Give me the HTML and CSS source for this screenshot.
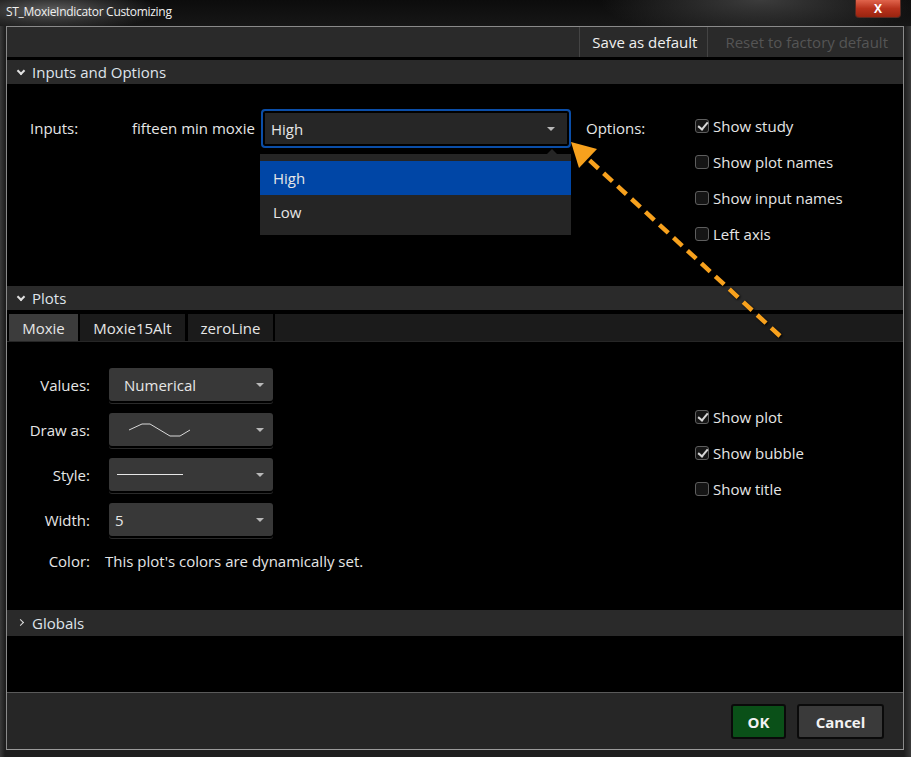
FILE: index.html
```html
<!DOCTYPE html>
<html lang="en">
<head>
    <meta charset="UTF-8">
    <title>ST_MoxieIndicator Customizing</title>
    <link rel="stylesheet" href="styles.css">
</head>
<body>
<div class="window">
    <div class="titlebar">
        <span class="title">ST_MoxieIndicator Customizing</span>
        <button class="close">X</button>
    </div>

    <div class="panel">
        <div class="toolbar">
            <span class="tool-btn">Save as default</span>
            <span class="tool-btn disabled">Reset to factory default</span>
        </div>

        <div class="section-head"><span class="chev down"></span>Inputs and Options</div>
        <div class="inputs-body">
            <span class="lbl inputs-lbl">Inputs:</span>
            <span class="lbl input-name">fifteen min moxie</span>
            <div class="select-wrap">
                <div class="select focused">
                    <span>High</span>
                    <span class="caret"></span>
                </div>
                <div class="menu">
                    <div class="menu-item active">High</div>
                    <div class="menu-item">Low</div>
                </div>
            </div>
            <span class="lbl options-lbl">Options:</span>
            <div class="checks">
                <label class="check"><span class="box on"></span>Show study</label>
                <label class="check"><span class="box"></span>Show plot names</label>
                <label class="check"><span class="box"></span>Show input names</label>
                <label class="check"><span class="box"></span>Left axis</label>
            </div>
        </div>

        <div class="section-head"><span class="chev down"></span>Plots</div>
        <div class="tabs">
            <span class="tab active">Moxie</span>
            <span class="tab">Moxie15Alt</span>
            <span class="tab">zeroLine</span>
            <span class="tab-fill"></span>
        </div>
        <div class="plot-body">
            <div class="plot-form">
                <div class="form-row">
                    <span class="form-lbl">Values:</span>
                    <div class="dd"><span class="dd-text">Numerical</span><span class="caret"></span></div>
                </div>
                <div class="form-row">
                    <span class="form-lbl">Draw as:</span>
                    <div class="dd">
                        <svg class="dd-icon" width="90" height="33" viewBox="0 0 90 33">
                            <polyline points="20,17 33,11 41,11 61,23 71,23 81,17" fill="none" stroke="#d8d8d8" stroke-width="1"/>
                        </svg>
                        <span class="caret"></span>
                    </div>
                </div>
                <div class="form-row">
                    <span class="form-lbl">Style:</span>
                    <div class="dd">
                        <svg class="dd-icon" width="90" height="33" viewBox="0 0 90 33">
                            <line x1="8" y1="16.5" x2="74" y2="16.5" stroke="#e6e6e6" stroke-width="1"/>
                        </svg>
                        <span class="caret"></span>
                    </div>
                </div>
                <div class="form-row">
                    <span class="form-lbl">Width:</span>
                    <div class="dd"><span class="dd-text short">5</span><span class="caret"></span></div>
                </div>
                <div class="form-row color-row">
                    <span class="form-lbl">Color:</span>
                    <span class="color-note">This plot's colors are dynamically set.</span>
                </div>
            </div>
            <div class="checks plot-checks">
                <label class="check"><span class="box on"></span>Show plot</label>
                <label class="check"><span class="box on"></span>Show bubble</label>
                <label class="check"><span class="box"></span>Show title</label>
            </div>
        </div>

        <div class="section-head globals"><span class="chev right"></span>Globals</div>
        <div class="globals-body"></div>

        <div class="footer">
            <button class="btn ok">OK</button>
            <button class="btn cancel">Cancel</button>
        </div>
    </div>

    <!-- annotation arrow drawn over the dialog -->
    <svg class="annot" width="911" height="757" viewBox="0 0 911 757">
        <line x1="780" y1="336" x2="586" y2="157" stroke="#f7a11d" stroke-width="4.5" stroke-dasharray="12 7"/>
        <polygon points="571,142 579,168 597,149" fill="#f7a11d"/>
    </svg>
</div>
</body>
</html>
```

FILE: styles.css
```css
* {
    box-sizing: border-box;
}
body {
    margin: 0;
    background-color: #141414;
    font-family: "Open Sans", "Liberation Sans", sans-serif;
    font-size: 15px;
    color: #e6e6e6;
}
.window {
    position: relative;
    width: 911px;
    height: 757px;
    overflow: hidden;
    background: linear-gradient(to right, #3a3a3a 0, #1e1e1e 5px, #1e1e1e 904px, #3a3a3a 911px);
}
.titlebar {
    height: 26px;
    display: flex;
    align-items: flex-start;
    justify-content: space-between;
    background:
        radial-gradient(ellipse 110px 22px at 50px 10px, #5c5c5c 0, rgba(60,60,60,0.6) 60%, rgba(0,0,0,0) 100%),
        radial-gradient(ellipse 160px 40px at 760px 0, #3c3c3c 0, rgba(0,0,0,0) 100%),
        linear-gradient(#0c0c0c, #161616);
}
.title {
    font-size: 12px;
    color: #f0f0f0;
    padding: 3px 0 0 6px;
    letter-spacing: -0.3px;
}
.close {
    margin-right: 10px;
    width: 46px;
    height: 18px;
    border: 1px solid #5a2a22;
    border-top: none;
    border-radius: 0 0 4px 4px;
    background: linear-gradient(#e0644c, #b8321c 50%, #9a2410);
    color: #fff;
    font-family: "Open Sans", sans-serif;
    font-weight: bold;
    font-size: 12px;
    line-height: 14px;
    padding: 0;
}
.panel {
    margin-left: 6px;
    width: 898px;
    height: 724px;
    border: 1px solid #8a8a8a;
    border-bottom-color: #9a9a9a;
    background-color: #000;
    display: flex;
    flex-direction: column;
}
.toolbar {
    height: 30px;
    background-color: #2a2a2a;
    display: flex;
    justify-content: flex-end;
    align-items: stretch;
    margin-bottom: 3px;
    padding-right: 15px;
}
.tool-btn {
    display: flex;
    align-items: center;
    padding: 0 10px 0 12px;
    border-left: 1px solid #444;
    color: #f0f0f0;
    font-size: 15px;
}
.tool-btn.disabled {
    color: #555;
    padding-left: 17px;
    padding-right: 0;
}
.section-head {
    height: 24px;
    background-color: #2a2a2a;
    display: flex;
    align-items: center;
    padding-left: 10px;
    color: #dfe4ea;
}
.section-head.globals {
    height: 26px;
}
.chev {
    width: 8px;
    height: 12px;
    margin-right: 7px;
    position: relative;
}
.chev::after {
    content: "";
    position: absolute;
    left: 1px;
    top: 2px;
    width: 4px;
    height: 4px;
    border-right: 2px solid #e0e0e0;
    border-bottom: 2px solid #e0e0e0;
}
.chev.down::after {
    transform: rotate(45deg);
}
.chev.right::after {
    left: 1px;
    top: 3px;
    width: 4px;
    height: 4px;
    border-width: 1.5px;
    transform: rotate(-45deg);
}
.inputs-body {
    height: 201px;
    display: flex;
    align-items: flex-start;
    padding: 24px 0 0 23px;
    margin-bottom: 1px;
}
.lbl {
    height: 39px;
    display: flex;
    align-items: center;
    white-space: nowrap;
}
.inputs-lbl {
    width: 102px;
}
.input-name {
    width: 129px;
}
.select-wrap {
    position: relative;
    margin-top: 1px;
}
.select {
    width: 310px;
    height: 39px;
    border-radius: 4px;
    background-color: #262626;
    display: flex;
    align-items: center;
    justify-content: space-between;
    padding: 0 14px 0 8px;
}
.select.focused {
    border: 2px solid #0b4ea8;
    box-shadow: inset 0 0 0 2px #000;
}
.caret {
    width: 0;
    height: 0;
    border-left: 4px solid transparent;
    border-right: 4px solid transparent;
    border-top: 4px solid #b8b8b8;
}
.menu {
    position: absolute;
    left: -1px;
    top: 45px;
    width: 311px;
    height: 81px;
    background-color: #252525;
    padding-top: 7px;
}
.menu::before {
    content: "";
    position: absolute;
    right: 14px;
    top: -5px;
    border-left: 5px solid transparent;
    border-right: 5px solid transparent;
    border-bottom: 5px solid #252525;
}
.menu-item {
    height: 34px;
    display: flex;
    align-items: center;
    padding-left: 13px;
}
.menu-item.active {
    background-color: #0046a6;
}
.options-lbl {
    margin-left: 15px;
    width: 109px;
}
.checks {
    display: flex;
    flex-direction: column;
}
.check {
    height: 36px;
    display: flex;
    align-items: center;
    color: #e6e6e6;
    white-space: nowrap;
}
.box {
    width: 14px;
    height: 14px;
    border: 1px solid #5e5e5e;
    border-radius: 3px;
    background-color: #151515;
    margin-right: 4px;
    position: relative;
}
.box.on::after {
    content: "";
    position: absolute;
    left: 4px;
    top: 0;
    width: 4px;
    height: 8px;
    border-right: 2px solid #d8d8d8;
    border-bottom: 2px solid #d8d8d8;
    transform: rotate(40deg);
}
.tabs {
    margin-top: 4px;
    height: 28px;
    display: flex;
    gap: 2px;
    padding-left: 2px;
    border-bottom: 1px solid #262626;
}
.tab {
    display: flex;
    align-items: center;
    justify-content: center;
    background-color: #1b1b1b;
    height: 27px;
}
.tab.active {
    background-color: #3c3c3c;
    width: 69px;
}
.tab:nth-child(2) {
    width: 105px;
}
.tab:nth-child(3) {
    width: 85px;
    margin-left: 1px;
}
.tab-fill {
    flex: 1;
    background-color: #1b1b1b;
    height: 27px;
}
.plot-body {
    height: 268px;
    display: flex;
    padding-top: 26px;
}
.plot-form {
    width: 688px;
    display: flex;
    flex-direction: column;
    gap: 12px;
}
.form-row {
    display: flex;
    align-items: center;
    height: 33px;
}
.form-lbl {
    width: 83px;
    text-align: right;
    margin-right: 19px;
}
.dd {
    width: 164px;
    height: 33px;
    border-radius: 3px;
    background-color: #383838;
    box-shadow: 0 2px 0 #000, 0 3px 0 #2a2a2a;
    display: flex;
    align-items: center;
    justify-content: space-between;
    padding-right: 9px;
}
.dd-text {
    padding-left: 15px;
}
.dd-text.short {
    padding-left: 6px;
}
.dd-icon {
    display: block;
}
.color-row {
    margin-top: -4px;
}
.color-row .form-lbl {
    margin-right: 15px;
}
.plot-checks {
    margin-top: 31px;
}
.globals-body {
    height: 57px;
    border-bottom: 1px solid #5a5a5a;
}
.footer {
    flex: 1;
    background-color: #262626;
    display: flex;
    justify-content: flex-end;
    align-items: flex-start;
    gap: 11px;
    padding: 11px 19px 0 0;
}
.btn {
    height: 35px;
    padding: 0;
    border: 2px solid #0a0a0a;
    border-radius: 3px;
    background-color: #3a3a3a;
    color: #f2f2f2;
    font-family: "Open Sans", "Liberation Sans", sans-serif;
    font-weight: bold;
    font-size: 15px;
}
.btn.ok {
    width: 55px;
    background-color: #0a5018;
}
.btn.cancel {
    width: 87px;
}
.annot {
    position: absolute;
    left: 0;
    top: 0;
    pointer-events: none;
    filter: drop-shadow(1px 1px 1px rgba(0, 0, 0, 0.9));
}
```
